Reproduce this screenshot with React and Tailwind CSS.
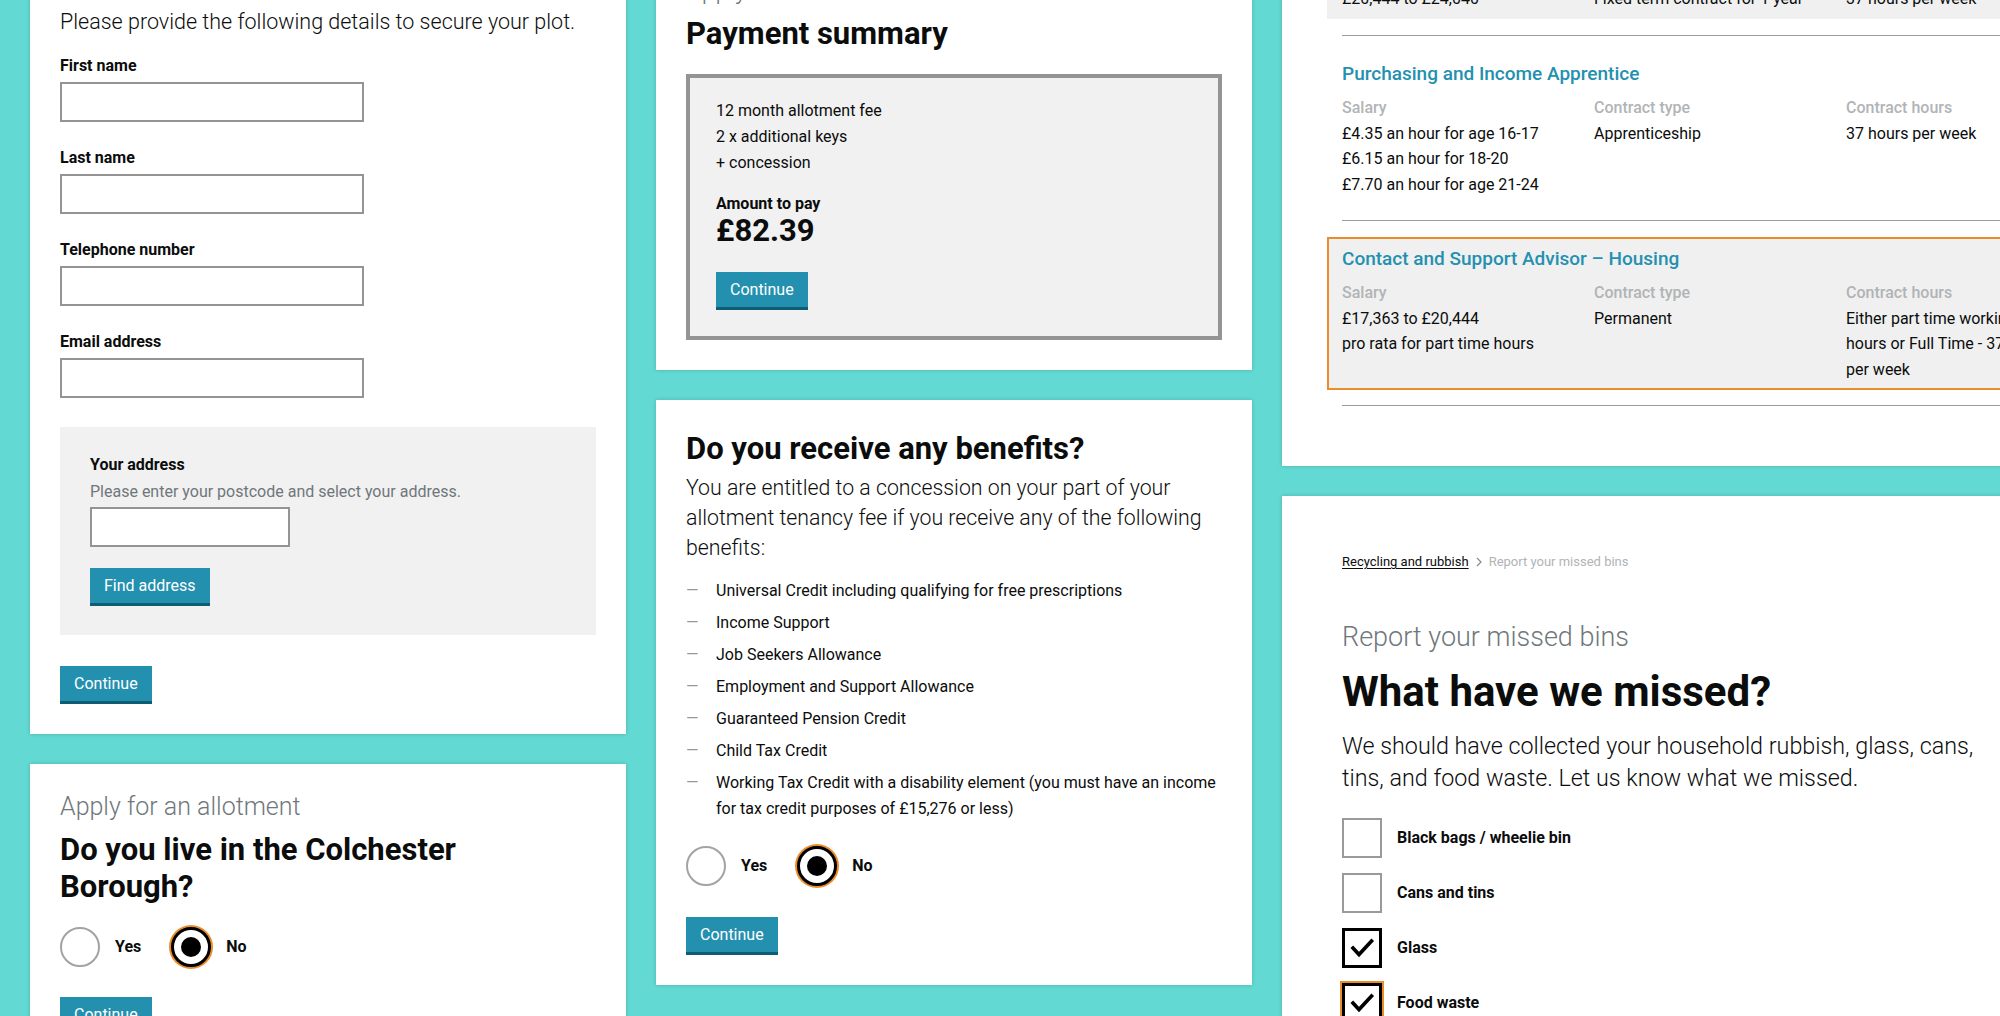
import React from "react";

const FONT = "font-['Roboto','Liberation_Sans',sans-serif]";

function Card({ className = "", children }) {
  return (
    <div className={"bg-white shadow-[0_0_4px_rgba(0,0,0,0.18)] " + className}>
      {children}
    </div>
  );
}

function Btn({ children }) {
  return (
    <button className="block h-[38px] border-b-[3px] border-[#0e5d72] bg-[#2490b0] px-[14px] text-[16px] leading-none text-white">
      {children}
    </button>
  );
}

function Field({ label }) {
  return (
    <div className="mb-[25px]">
      <div className="mb-[5px] text-[16px] font-bold leading-[22px] text-[#0b0c0c]">{label}</div>
      <input className="block h-[40px] w-[304px] border-2 border-[#949494] bg-white" />
    </div>
  );
}

function Radio({ label, checked }) {
  return (
    <div className="flex items-center">
      {checked ? (
        <span className="flex h-[40px] w-[40px] items-center justify-center rounded-full border-[3px] border-black bg-white shadow-[0_0_0_2px_#ea8b2c]">
          <span className="h-[20px] w-[20px] rounded-full bg-black" />
        </span>
      ) : (
        <span className="h-[40px] w-[40px] rounded-full border-2 border-[#a3a3a3] bg-white" />
      )}
      <span className="ml-[15px] text-[16px] font-bold text-[#0b0c0c]">{label}</span>
    </div>
  );
}

function RadioRow() {
  return (
    <div className="flex items-center gap-[30px]">
      <Radio label="Yes" />
      <Radio label="No" checked />
    </div>
  );
}

function Checkbox({ label, checked, focus }) {
  let box = "relative h-[40px] w-[40px] bg-white ";
  if (checked) box += "border-[3px] border-black ";
  else box += "border-2 border-[#9a9a9a] ";
  if (focus) box += "shadow-[0_0_0_2px_#ea8b2c] ";
  return (
    <div className="flex items-center gap-[15px]">
      <span className={box}>
        {checked && (
          <svg className="absolute left-[-3px] top-[-3px]" width="40" height="40" viewBox="0 0 40 40">
            <path d="M11 20 L17 26.5 L29.5 13" fill="none" stroke="#000" strokeWidth="3.6" strokeLinecap="square" />
          </svg>
        )}
      </span>
      <span className="text-[16px] font-bold text-[#0b0c0c]">{label}</span>
    </div>
  );
}

function JobItem({ title, values, grey, focus }) {
  let cls = "border-2 pt-[8px] pb-[6px] pl-[13px] ";
  cls += focus ? "border-[#ea8b2c] bg-[#f0f0f0] " : "border-transparent ";
  if (grey) cls += "bg-[#f0f0f0] ";
  const labels = ["Salary", "Contract type", "Contract hours"];
  return (
    <div className={cls}>
      <div className="mb-[9px] text-[19px] font-medium leading-[24px] text-[#2490b0]">{title}</div>
      <div className="grid grid-cols-[222px_222px_205px] gap-x-[30px]">
        {labels.map((l, i) => (
          <div key={l}>
            <div className="text-[16px] font-medium leading-[25.5px] text-[#b1b4b6]">{l}</div>
            {values[i].map((v) => (
              <div key={v} className="text-[16px] leading-[25.5px] text-[#0b0c0c]">{v}</div>
            ))}
          </div>
        ))}
      </div>
    </div>
  );
}

function Sep() {
  return <div className="ml-[15px] h-px bg-[#9a9a9a]" />;
}

const benefits = [
  "Universal Credit including qualifying for free prescriptions",
  "Income Support",
  "Job Seekers Allowance",
  "Employment and Support Allowance",
  "Guaranteed Pension Credit",
  "Child Tax Credit",
  "Working Tax Credit with a disability element (you must have an income for tax credit purposes of £15,276 or less)",
];

export default function App() {
  return (
    <div className={"flex h-[1016px] w-[2000px] items-start gap-[30px] overflow-hidden bg-[#62d9d3] pl-[30px] " + FONT}>
      {/* Column 1 */}
      <div className="-mt-[22px] flex w-[596px] shrink-0 flex-col gap-[30px]">
        <Card className="px-[30px] pt-[30px] pb-[30px]">
          <p className="mb-[19px] text-[21.5px] font-light leading-[28px] text-[#0b0c0c]">
            Please provide the following details to secure your plot.
          </p>
          <Field label="First name" />
          <Field label="Last name" />
          <Field label="Telephone number" />
          <div className="mb-[29px]">
            <div className="mb-[5px] text-[16px] font-bold leading-[22px] text-[#0b0c0c]">Email address</div>
            <input className="block h-[40px] w-[304px] border-2 border-[#949494] bg-white" />
          </div>
          <div className="bg-[#f1f1f1] px-[30px] pt-[27px] pb-[29px]">
            <div className="mb-[5px] text-[16px] font-bold leading-[22px] text-[#0b0c0c]">Your address</div>
            <div className="mb-[4px] text-[16px] leading-[22px] text-[#6f777b]">
              Please enter your postcode and select your address.
            </div>
            <input className="mb-[21px] block h-[40px] w-[200px] border-2 border-[#949494] bg-white" />
            <Btn>Find address</Btn>
          </div>
          <div className="mt-[31px]">
            <Btn>Continue</Btn>
          </div>
        </Card>
        <Card className="px-[30px] pt-[27px] pb-[30px]">
          <div className="text-[25px] font-light leading-[32px] text-[#6f777b]">Apply for an allotment</div>
          <h1 className="mt-[8px] max-w-[460px] text-[31px] font-bold leading-[37px] text-[#0b0c0c]">
            Do you live in the Colchester Borough?
          </h1>
          <div className="mt-[22px]">
            <RadioRow />
          </div>
          <div className="mt-[30px]">
            <Btn>Continue</Btn>
          </div>
        </Card>
      </div>

      {/* Column 2 */}
      <div className="-mt-[50px] flex w-[596px] shrink-0 flex-col gap-[30px]">
        <Card className="px-[30px] pt-[25px] pb-[30px]">
          <div className="text-[25px] font-light leading-[32px] text-[#6f777b]">Apply for an allotment</div>
          <h1 className="mt-[8px] text-[31px] font-bold leading-[38px] text-[#0b0c0c]">Payment summary</h1>
          <div className="mt-[21px] border-4 border-[#949494] bg-[#f1f1f1] px-[26px] pt-[20px] pb-[26px]">
            <div className="text-[16px] leading-[26px] text-[#0b0c0c]">12 month allotment fee</div>
            <div className="text-[16px] leading-[26px] text-[#0b0c0c]">2 x additional keys</div>
            <div className="text-[16px] leading-[26px] text-[#0b0c0c]">+ concession</div>
            <div className="mt-[17px] text-[16px] font-bold leading-[22px] text-[#0b0c0c]">Amount to pay</div>
            <div className="text-[31px] font-bold leading-[32px] text-[#0b0c0c]">£82.39</div>
            <div className="mt-[25px]">
              <Btn>Continue</Btn>
            </div>
          </div>
        </Card>
        <Card className="px-[30px] pt-[30px] pb-[30px]">
          <h1 className="text-[31px] font-bold leading-[38px] text-[#0b0c0c]">Do you receive any benefits?</h1>
          <p className="mt-[5px] text-[21.3px] font-light leading-[30px] text-[#0b0c0c]">
            You are entitled to a concession on your part of your allotment tenancy fee if you receive any of the following benefits:
          </p>
          <ul className="mt-[15px] flex flex-col gap-[6px]">
            {benefits.map((b) => (
              <li key={b} className="flex text-[16px] leading-[26px] text-[#0b0c0c]">
                <span className="w-[30px] shrink-0 text-[#9a9a9a]">—</span>
                <span className="w-[505px]">{b}</span>
              </li>
            ))}
          </ul>
          <div className="mt-[24px]">
            <RadioRow />
          </div>
          <div className="mt-[31px]">
            <Btn>Continue</Btn>
          </div>
        </Card>
      </div>

      {/* Column 3 */}
      <div className="-mt-[113px] flex w-[780px] shrink-0 flex-col gap-[30px]">
        <Card className="pl-[45px] pt-[30px] pb-[60px]">
          <JobItem
            grey
            title="Business Support Officer"
            values={[["£20,444 to £24,040"], ["Fixed term contract for 1 year"], ["37 hours per week"]]}
          />
          <div className="mt-[16px]">
            <Sep />
          </div>
          <div className="mt-[16px]">
            <JobItem
              title="Purchasing and Income Apprentice"
              values={[
                ["£4.35 an hour for age 16-17", "£6.15 an hour for 18-20", "£7.70 an hour for age 21-24"],
                ["Apprenticeship"],
                ["37 hours per week"],
              ]}
            />
          </div>
          <div className="mt-[15px]">
            <Sep />
          </div>
          <div className="mt-[16px]">
            <JobItem
              focus
              title="Contact and Support Advisor – Housing"
              values={[
                ["£17,363 to £20,444", "pro rata for part time hours"],
                ["Permanent"],
                ["Either part time working hours or Full Time - 37 hours per week"],
              ]}
            />
          </div>
          <div className="mt-[15px]">
            <Sep />
          </div>
        </Card>
        <Card className="pl-[60px] pt-[56px] pb-[60px]">
          <div className="flex items-center text-[13px] leading-[20px]">
            <span className="text-[#0b0c0c] underline underline-offset-2">Recycling and rubbish</span>
            <svg className="mx-[7px]" width="6" height="10" viewBox="0 0 6 10">
              <path d="M1 1 L5 5 L1 9" fill="none" stroke="#8a8a8a" strokeWidth="1.2" />
            </svg>
            <span className="text-[#b1b4b6]">Report your missed bins</span>
          </div>
          <div className="mt-[47px] text-[27px] font-light leading-[36px] text-[#6f777b]">Report your missed bins</div>
          <h1 className="mt-[12px] text-[42px] font-bold leading-[50px] text-[#0b0c0c]">What have we missed?</h1>
          <p className="mt-[13px] max-w-[660px] text-[23.3px] font-light leading-[32px] text-[#0b0c0c]">
            We should have collected your household rubbish, glass, cans, tins, and food waste. Let us know what we missed.
          </p>
          <div className="mt-[24px] flex flex-col gap-[15px]">
            <Checkbox label="Black bags / wheelie bin" />
            <Checkbox label="Cans and tins" />
            <Checkbox label="Glass" checked />
            <Checkbox label="Food waste" checked focus />
          </div>
        </Card>
      </div>
    </div>
  );
}
